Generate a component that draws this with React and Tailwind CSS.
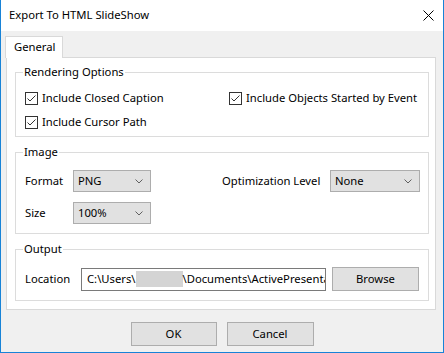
import React from 'react'

function Check({ label }) {
  return (
    <label className="flex h-[16px] items-center gap-[4px] whitespace-nowrap">
      <span className="flex h-[13px] w-[13px] shrink-0 items-center justify-center border border-[#333333] bg-white">
        <svg width="11" height="11" viewBox="0 0 11 11">
          <polyline points="1.5,5.5 4,8 9.5,2.5" fill="none" stroke="#333333" strokeWidth="1" />
        </svg>
      </span>
      <span>{label}</span>
    </label>
  )
}

function Select({ value, width }) {
  return (
    <div className={`flex h-[22px] ${width} shrink-0 items-center justify-between border border-[#adadad] bg-[#e1e1e1] pl-[4px] pr-[7px]`}>
      <span>{value}</span>
      <svg width="8" height="5" viewBox="0 0 8 5">
        <polyline points="0.5,0.5 4,4 7.5,0.5" fill="none" stroke="#606060" strokeWidth="1" />
      </svg>
    </div>
  )
}

// legend sits inside the padding box, so pull it back to 8px from the border
function Group({ title, className, children }) {
  return (
    <fieldset className={`min-w-0 border border-[#dcdcdc] ${className}`}>
      <legend className="-ml-[2px] px-[1px] leading-[16px]">{title}</legend>
      {children}
    </fieldset>
  )
}

function Button({ children, width }) {
  return (
    <button className={`h-[24px] ${width} border border-[#adadad] bg-[#e1e1e1] text-center leading-[22px]`}>
      {children}
    </button>
  )
}

export default function App() {
  return (
    <div className="flex h-[353px] w-[444px] flex-col overflow-hidden border-x border-b border-[#1883d7] bg-[#f0f0f0] font-['Segoe_UI','Noto_Sans',sans-serif] text-[11.25px] text-black">
      <div className="flex h-[31px] shrink-0 items-center justify-between bg-white pl-[8px] pr-[9px]">
        <span>Export To HTML SlideShow</span>
        <svg width="11" height="11" viewBox="0 0 11 11">
          <path d="M0.5 0.5 L10.5 10.5 M10.5 0.5 L0.5 10.5" stroke="#000" strokeWidth="1" />
        </svg>
      </div>

      <div className="flex flex-col px-[4px] pt-[5px]">
        <div className="flex">
          <div className="relative z-10 -mb-px h-[22px] w-[58px] border-x border-t border-[#d9d9d9] bg-white pl-[8px] leading-[19px]">
            General
          </div>
        </div>
        <div className="ml-[1px] flex h-[253px] w-[430px] flex-col border border-[#d9d9d9] bg-white pl-[8px] pr-[6px] pt-[6px]">
          <Group title="Rendering Options" className="pb-[6px] pl-[9px]">
            <div className="flex flex-col gap-[8px] pt-[10px]">
              <div className="flex">
                <div className="w-[204px] shrink-0">
                  <Check label="Include Closed Caption" />
                </div>
                <Check label="Include Objects Started by Event" />
              </div>
              <Check label="Include Cursor Path" />
            </div>
          </Group>

          <Group title="Image" className="mt-[7px] pb-[9px] pl-[9px]">
            <div className="flex flex-col gap-[10px] pt-[10px]">
              <div className="flex items-center">
                <span className="w-[48px] shrink-0">Format</span>
                <Select value="PNG" width="w-[78px]" />
                <span className="ml-[71px] w-[108px] shrink-0">Optimization Level</span>
                <Select value="None" width="w-[90px]" />
              </div>
              <div className="flex items-center">
                <span className="w-[48px] shrink-0">Size</span>
                <Select value="100%" width="w-[78px]" />
              </div>
            </div>
          </Group>

          <Group title="Output" className="mt-[7px] pb-[9px] pl-[9px]">
            <div className="flex items-center pt-[10px]">
              <span className="w-[56px] shrink-0">Location</span>
              <div className="flex h-[23px] w-[245px] shrink-0 items-center overflow-hidden whitespace-nowrap border border-[#7a7a7a] bg-white pl-[5px]">
                <span>C:\Users\</span>
                <span className="h-[16px] w-[47px] shrink-0 bg-[#d4d4d4]" />
                <span>\Documents\ActivePresentation</span>
              </div>
              <div className="ml-[6px] shrink-0">
                <Button width="w-[87px]">Browse</Button>
              </div>
            </div>
          </Group>
        </div>
      </div>

      <div className="flex justify-center gap-[10px] pt-[12px]">
        <Button width="w-[86px]">OK</Button>
        <Button width="w-[87px]">Cancel</Button>
      </div>
    </div>
  )
}
